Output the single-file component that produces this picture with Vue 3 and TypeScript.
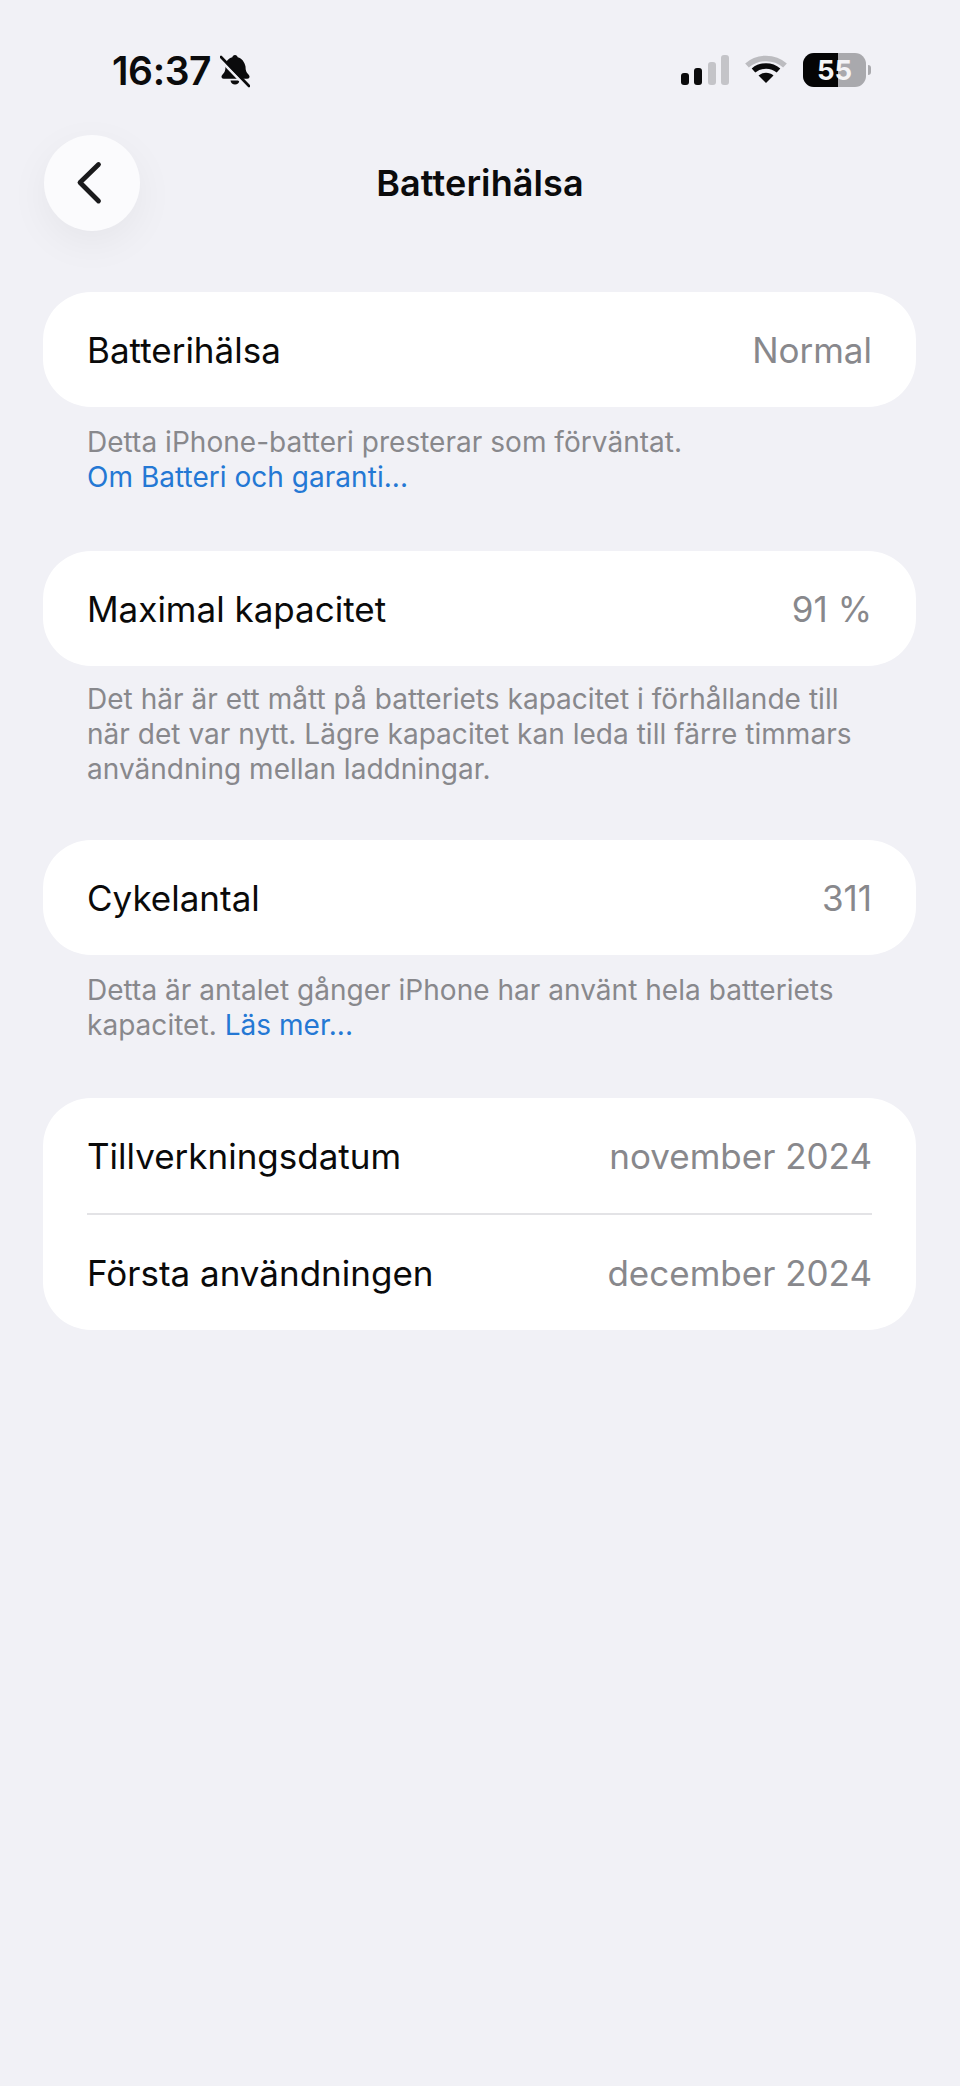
<template>
  <div class="page">
    <div class="status-bar">
      <div class="status-left">
        <span class="clock">16:37</span>
        <svg class="bell" viewBox="0 0 30 34" width="30" height="34">
          <path d="M15 1c-1.500 0-2.500 1-2.700 2.300C8 4.500 5.500 8 5.500 12.500c0 4-1 6-2.500 7.500-1 1-1.500 1.800-1.500 2.700 0 1.200.9 2 2.200 2h23.600c1.300 0 2.200-.8 2.200-2 0-.9-.5-1.700-1.500-2.700-1.500-1.500-2.500-3.500-2.500-7.500C24.500 8 22 4.500 17.700 3.300 17.500 2 16.500 1 15 1z" fill="#0b0b0c" />
          <path d="M10.500 26.500h9c-.3 2.500-2.200 4-4.500 4s-4.200-1.500-4.500-4z" fill="#0b0b0c" />
          <path d="M-.7 4.700 27.300 33.700" stroke="#f1f1f6" stroke-width="3" />
          <path d="M1 3 29 32" stroke="#0b0b0c" stroke-width="2.600" stroke-linecap="round" />
        </svg>
      </div>
      <div class="status-right">
        <div class="signal">
          <span v-for="bar in signalBars" :key="bar.height" class="signal-bar" :class="{ dim: bar.dim }" :style="{ height: bar.height + 'px' }"></span>
        </div>
        <svg class="wifi" viewBox="0 0 42 30" width="42" height="30">
          <path d="M2 10.500C12.500 1 29.500 1 40 10.500" fill="none" stroke="#bcbcc0" stroke-width="5.500" />
          <path d="M8.500 15.500C15.500 9.500 26.500 9.500 33.500 15.500" fill="none" stroke="#0b0b0c" stroke-width="5.500" />
          <path d="M21 28 13.500 20.500C17.500 16.800 24.500 16.800 28.500 20.500z" fill="#0b0b0c" />
        </svg>
        <div class="battery">
          <div class="battery-body">
            <div class="battery-fill"></div>
            <span class="battery-num">55</span>
          </div>
          <span class="battery-tip"></span>
        </div>
      </div>
    </div>

    <div class="nav">
      <button class="back" type="button" aria-label="Tillbaka">
        <svg viewBox="0 0 30 48" width="30" height="48">
          <path d="M24.500 5.500 6 23.500 24.500 42" fill="none" stroke="#1a1a1c" stroke-width="4.800" stroke-linecap="round" stroke-linejoin="round" />
        </svg>
      </button>
      <h1 class="title">Batterihälsa</h1>
    </div>

    <div class="content">
      <section v-for="group in groups" :key="group.rows[0].label" class="group">
        <div class="card">
          <div v-for="row in group.rows" :key="row.label" class="row">
            <span class="row-label">{{ row.label }}</span>
            <span class="row-value">{{ row.value }}</span>
          </div>
        </div>
        <p v-if="group.note" class="note" :class="group.noteClass">
          <span v-for="line in group.note" :key="line" class="note-line">{{ line }}</span>
          <span v-if="group.link" class="note-line">{{ group.linkPrefix }}<a class="link">{{ group.link }}</a></span>
        </p>
      </section>
    </div>
  </div>
</template>

<script setup lang="ts">
interface Row {
  label: string
  value: string
}

interface Group {
  rows: Row[]
  note?: string[]
  link?: string
  linkPrefix?: string
  noteClass?: string
}

const signalBars = [
  { height: 12, dim: false },
  { height: 17, dim: false },
  { height: 23, dim: true },
  { height: 30, dim: true },
]

const groups: Group[] = [
  {
    rows: [{ label: 'Batterihälsa', value: 'Normal' }],
    note: ['Detta iPhone-batteri presterar som förväntat.'],
    link: 'Om Batteri och garanti...',
  },
  {
    rows: [{ label: 'Maximal kapacitet', value: '91 %' }],
    note: [
      'Det här är ett mått på batteriets kapacitet i förhållande till',
      'när det var nytt. Lägre kapacitet kan leda till färre timmars',
      'användning mellan laddningar.',
    ],
    noteClass: 'compact',
  },
  {
    rows: [{ label: 'Cykelantal', value: '311' }],
    note: ['Detta är antalet gånger iPhone har använt hela batteriets'],
    linkPrefix: 'kapacitet. ',
    link: 'Läs mer...',
    noteClass: 'last',
  },
  {
    rows: [
      { label: 'Tillverkningsdatum', value: 'november 2024' },
      { label: 'Första användningen', value: 'december 2024' },
    ],
  },
]
</script>

<style scoped>
.page {
  width: 960px;
  height: 2086px;
  overflow: hidden;
  background: #f1f1f6;
  font-family: Inter, "Liberation Sans", sans-serif;
}

.status-bar {
  height: 135px;
  padding: 48px 89px 0 112px;
  box-sizing: border-box;
  display: flex;
  justify-content: space-between;
  align-items: flex-start;
}

.status-left {
  display: flex;
  align-items: center;
  gap: 9px;
}

.clock {
  font-size: 39px;
  line-height: 46px;
  font-weight: 600;
  color: #0b0b0c;
  letter-spacing: -0.4px;
}

.bell {
  display: block;
}

.status-right {
  display: flex;
  align-items: center;
  padding-top: 5px;
}

.signal {
  display: flex;
  align-items: flex-end;
  gap: 5.3px;
  margin-right: 16px;
}

.signal-bar {
  width: 8px;
  border-radius: 3px;
  background: #0b0b0c;
}

.signal-bar.dim {
  background: #c4c4c8;
}

.wifi {
  display: block;
  margin-right: 16px;
}

.battery {
  display: flex;
  align-items: center;
  gap: 2px;
}

.battery-body {
  position: relative;
  width: 63px;
  height: 34px;
  border-radius: 11px;
  overflow: hidden;
  background: #a9a9ad;
  display: flex;
  align-items: center;
  justify-content: center;
}

.battery-fill {
  position: absolute;
  left: 0;
  top: 0;
  bottom: 0;
  width: 55%;
  background: #050505;
}

.battery-num {
  position: relative;
  font-size: 27.500px;
  font-weight: 700;
  color: #f4f4f6;
}

.battery-tip {
  width: 3px;
  height: 10px;
  border-radius: 0 3px 3px 0;
  background: #a9a9ad;
}

.nav {
  height: 96px;
  padding: 0 44px;
  position: relative;
  display: flex;
  align-items: center;
  justify-content: center;
}

.back {
  position: absolute;
  left: 44px;
  top: 0;
  width: 96px;
  height: 96px;
  padding: 0;
  border: none;
  border-radius: 50%;
  background: #fbfbfd;
  box-shadow: 0 12px 40px rgba(0, 0, 0, 0.05);
  display: flex;
  align-items: center;
  justify-content: center;
}

.back svg {
  margin-right: 6px;
}

.title {
  margin: 0;
  font-size: 36px;
  line-height: 44px;
  font-weight: 600;
  letter-spacing: 0.1px;
  color: #0b0b0c;
}

.content {
  padding: 61px 44px 0 43px;
  display: flex;
  flex-direction: column;
  gap: 56px;
}

.card {
  background: #fff;
  border-radius: 48px;
  padding: 0 44px;
}

.row {
  height: 115px;
  display: flex;
  align-items: center;
  justify-content: space-between;
  font-size: 35px;
}

.row + .row {
  border-top: 2px solid #e3e3e6;
  box-sizing: border-box;
  height: 117px;
}

.row-label {
  color: #0a0a0a;
}

.row-value {
  color: #88888c;
}

.note {
  margin: 0;
  padding: 18px 44px 0;
  font-size: 28px;
  line-height: 35px;
  letter-spacing: 0.03px;
  color: #88888c;
}

.note.compact {
  padding-top: 16px;
  margin-bottom: -3px;
}

.note.last {
  margin-bottom: -1px;
}

.note-line {
  display: block;
  white-space: nowrap;
}

.link {
  color: #2478d4;
}
</style>

<style>
html,
body {
  margin: 0;
  background: #f1f1f6;
}
</style>
